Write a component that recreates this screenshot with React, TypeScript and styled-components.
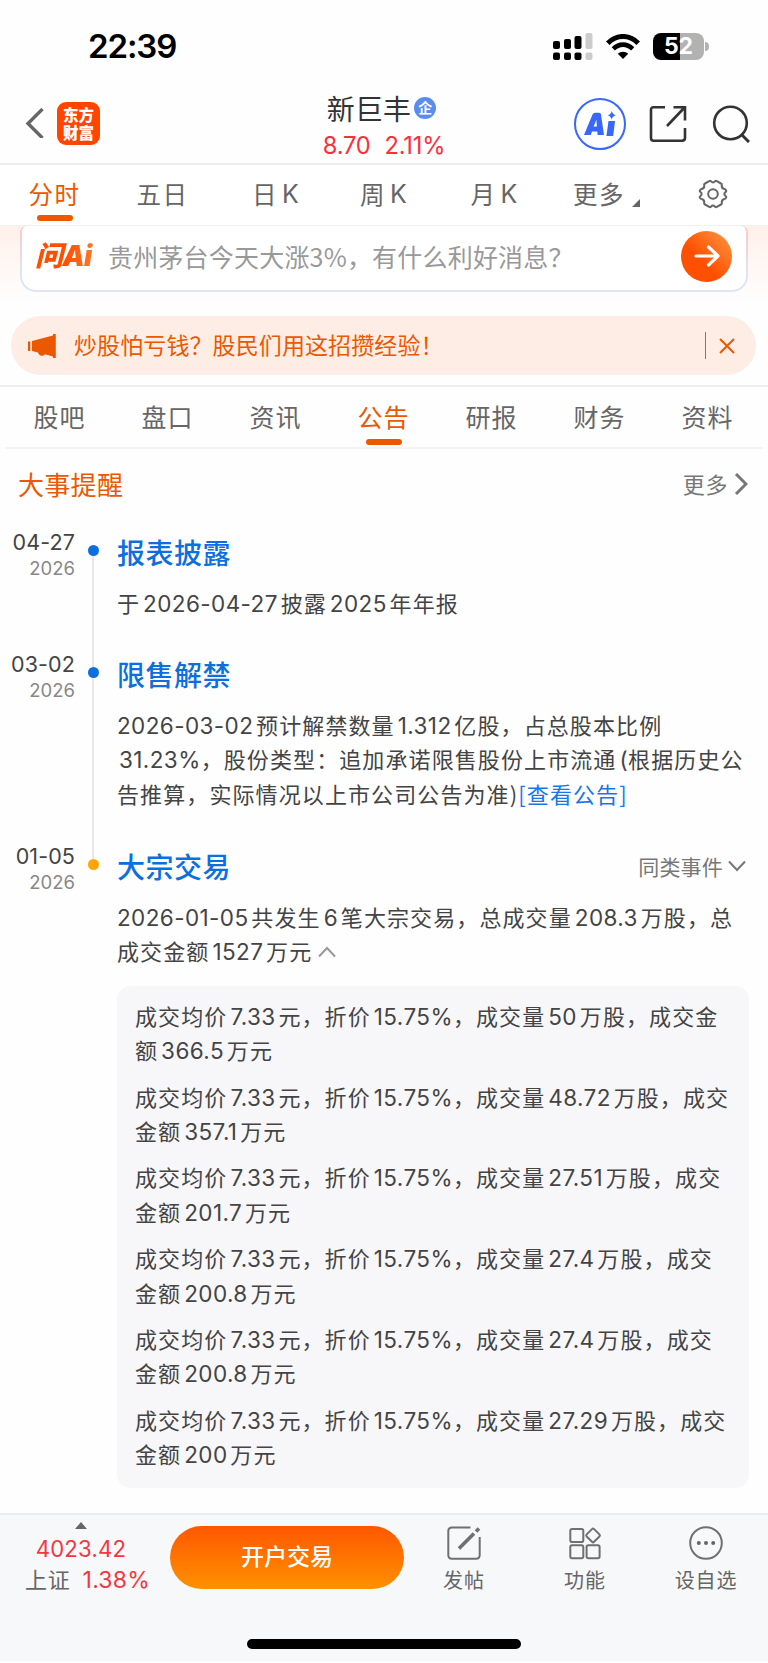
import React from 'react';
import styled, { createGlobalStyle } from 'styled-components';

const GlobalStyle = createGlobalStyle`
  * { box-sizing: border-box; }
  body {
    margin: 0;
    background: #fefefe;
    font-family: Inter, "Noto Sans CJK SC", sans-serif;
    color: #444;
  }
`;

const CJK = '"Noto Sans CJK SC", sans-serif';

const Page = styled.div`
  width: 768px;
  height: 1663px;
  overflow: hidden;
  display: flex;
  flex-direction: column;
`;

const StatusBar = styled.div`
  height: 78px;
  padding: 14px 59px 0 88px;
  display: flex;
  align-items: center;
  justify-content: space-between;
`;
const Clock = styled.div`
  font-size: 33px;
  font-weight: 600;
  color: #000;
  letter-spacing: -1.1px;
`;
const StatusIcons = styled.div`
  display: flex;
  align-items: center;
`;
const Battery = styled.div`
  width: 51px;
  height: 27px;
  margin-left: 13px;
  border-radius: 8px;
  background: linear-gradient(90deg, #000 52%, #b2b2b2 52%);
  color: #fff;
  font-size: 23px;
  font-weight: 700;
  line-height: 27px;
  text-align: center;
`;
const BatteryTip = styled.div`
  width: 4px;
  height: 9px;
  margin-left: 1px;
  border-radius: 0 4px 4px 0;
  background: #b2b2b2;
`;

const Header = styled.header`
  height: 87px;
  border-bottom: 2px solid #ececec;
  display: grid;
  grid-template-columns: 250px 1fr 250px;
`;
const HeaderLeft = styled.div`
  display: flex;
  align-items: center;
  padding: 6px 0 2px 25px;
  gap: 13px;
  height: 86px;
`;
const Brand = styled.div`
  width: 43px;
  height: 43px;
  border-radius: 9px;
  background: #ff4500;
  color: #fff;
  font: 900 15.5px/18px ${CJK};
  text-align: center;
  padding-top: 3px;
`;
const Quote = styled.div`
  display: flex;
  flex-direction: column;
  align-items: center;
  padding-top: 9px;
`;
const StockName = styled.div`
  display: flex;
  align-items: center;
  gap: 3px;
  height: 41px;
  padding-right: 5px;
  font: 400 28px/40px ${CJK};
  letter-spacing: 0.2px;
  color: #333;
`;
const CompanyBadge = styled.span`
  width: 22px;
  height: 22px;
  border-radius: 50%;
  background: #5a8cf0;
  color: #fff;
  font: 700 14px/21px ${CJK};
  letter-spacing: 0;
  text-align: center;
`;
const Price = styled.div`
  display: flex;
  gap: 14px;
  height: 34px;
  line-height: 35px;
  font-size: 23.7px;
  letter-spacing: -0.2px;
  color: #fb2f3b;
`;
const HeaderRight = styled.div`
  display: flex;
  align-items: center;
  justify-content: flex-end;
  gap: 23px;
  height: 86px;
  padding: 6px 18px 0 0;
`;
const AiButton = styled.div`
  width: 52px;
  height: 52px;
  border: 2.5px solid #3767fb;
  border-radius: 50%;
  display: flex;
  align-items: center;
  justify-content: center;
  color: #3767fb;
`;

const ChartTabs = styled.nav`
  height: 61px;
  border-bottom: 1px solid #f1f1f1;
  display: grid;
  grid-template-columns: 107px 109px 117px 99px 122px 103px 109px;
  background: #fff;
`;
const ChartTab = styled.div<{ $active?: boolean }>`
  display: flex;
  flex-direction: column;
  align-items: center;
  font: 400 24.5px/36px ${CJK};
  letter-spacing: 1.5px;
  padding: 11px 0 0 2px;
  color: ${(p) => (p.$active ? '#ec5800' : '#666')};
`;
const TabRow = styled.div`
  display: flex;
  align-items: center;
`;
const Latin = styled.span`
  font-size: 25px;
  font-family: Inter, sans-serif;
  margin-left: 4px;
  letter-spacing: 0;
`;
const Underline = styled.div`
  width: 36px;
  height: 6px;
  border-radius: 3px;
  background: #ec5800;
`;
const ChartUnderline = styled(Underline)`
  margin-top: 3px;
`;
const MoreMark = styled.svg`
  margin: 18px 0 0 7px;
`;
const Gear = styled.svg`
  margin-top: 3px;
`;

const AskArea = styled.section`
  height: 90px;
  padding: 0 20px;
  background: linear-gradient(#fff0ea, #fefefe 85%);
`;
const AskFrame = styled.div`
  height: 66px;
  padding: 0 2px 2px;
  border-radius: 6px 6px 16px 16px;
  background: linear-gradient(#ffc9c2, #dfe4f7 75%);
`;
const AskBox = styled.div`
  height: 64px;
  border-radius: 5px 5px 14px 14px;
  background: #fff;
  display: flex;
  align-items: center;
  padding: 0 14px 4px 13px;
`;
const AskLogo = styled.div`
  width: 73px;
  font: italic 900 28px/40px Inter, ${CJK};
  letter-spacing: -0.6px;
  background: linear-gradient(90deg, #ff4e00 40%, #ff8b3d);
  background-clip: text;
  color: transparent;
`;
const AskHint = styled.div`
  flex: 1;
  font: 400 25px/40px ${CJK};
  letter-spacing: 0.2px;
  color: #999;
`;
const Go = styled.div`
  width: 51px;
  height: 51px;
  border-radius: 50%;
  background: linear-gradient(45deg, #ff4f00 40%, #ff9a45);
  display: flex;
  align-items: center;
  justify-content: center;
`;

const Banner = styled.section`
  height: 59px;
  margin: 0 12px 10px 11px;
  padding: 0 21px 0 17px;
  border-radius: 30px;
  background: #fdede5;
  display: flex;
  align-items: center;
  color: #ec5800;
`;
const BannerText = styled.div`
  flex: 1;
  padding: 0 0 3px 18px;
  font: 400 23px/34px ${CJK};
  letter-spacing: 0.1px;
`;
const BannerRule = styled.div`
  width: 1.5px;
  height: 27px;
  margin-right: 13px;
  background: #ec5800;
`;

const InfoTabs = styled.nav`
  height: 62px;
  margin: 0 5px;
  border-bottom: 2px solid #f3f3f3;
  display: grid;
  grid-template-columns: repeat(7, 108px);
`;
const InfoWrap = styled.div`
  border-top: 2px solid #eee;
`;
const InfoTab = styled.div<{ $active?: boolean }>`
  display: flex;
  flex-direction: column;
  align-items: center;
  gap: 4px;
  padding: 10px 0 0 1px;
  font: 400 25px/38px ${CJK};
  letter-spacing: 1px;
  color: ${(p) => (p.$active ? '#ec5800' : '#666')};
`;

const SectionHead = styled.div`
  height: 79px;
  padding: 0 20px 9px 18px;
  display: flex;
  align-items: center;
  justify-content: space-between;
`;
const SectionTitle = styled.h2`
  margin: 0;
  font: 400 26px/40px ${CJK};
  letter-spacing: 0.3px;
  color: #ec5800;
`;
const More = styled.div`
  display: flex;
  align-items: center;
  gap: 6px;
  font: 400 22px/34px ${CJK};
  letter-spacing: 0.6px;
  color: #777;
`;
const MoreLabel = styled.span`
  padding-bottom: 2px;
`;

const Timeline = styled.main`
  height: 985px;
`;
const Item = styled.article<{ $h: number }>`
  height: ${(p) => p.$h}px;
  display: grid;
  grid-template-columns: 75px 42px 632px;
`;
const DateCol = styled.div`
  text-align: right;
`;
const Day = styled.div`
  font-size: 21.5px;
  line-height: 28px;
  letter-spacing: 0.1px;
  color: #444;
  white-space: nowrap;
`;
const Year = styled.div`
  font-size: 18.5px;
  line-height: 25px;
  letter-spacing: 0;
  color: #888;
`;
const Rail = styled.div`
  display: flex;
  flex-direction: column;
  align-items: center;
  padding-right: 6px;
`;
const Segment = styled.div<{ $grow?: boolean; $hidden?: boolean }>`
  width: 2px;
  height: 17px;
  flex: ${(p) => (p.$grow ? '1' : '0 0 17px')};
  background: ${(p) => (p.$hidden ? 'transparent' : '#e8e8e8')};
`;
const Dot = styled.div<{ $color: string }>`
  width: 11px;
  height: 11px;
  border-radius: 50%;
  background: ${(p) => p.$color};
`;
const ItemHead = styled.div`
  height: 34px;
  margin: 7px 0 16px;
  display: flex;
  align-items: center;
  justify-content: space-between;
`;
const ItemTitle = styled.h3`
  margin: 0;
  font: 500 28px/34px ${CJK};
  letter-spacing: 0.5px;
  color: #0b6fe0;
`;
const Similar = styled.div`
  display: flex;
  align-items: center;
  gap: 5px;
  padding-right: 3px;
  font: 400 21px/30px ${CJK};
  letter-spacing: 0.2px;
  color: #777;
`;
const Line = styled.div`
  height: 34.4px;
  font: 400 22px/34.4px ${CJK};
  letter-spacing: 1.1px;
  white-space: nowrap;
  color: #444;
`;
const Num = styled.span<{ $tight?: boolean; $indent?: boolean }>`
  font-family: Inter, sans-serif;
  font-size: 22.5px;
  letter-spacing: 0.4px;
  margin: 0 ${(p) => (p.$tight ? 0 : 2.8)}px 0 3px;
  &:first-child { margin-left: ${(p) => (p.$indent ? 2 : 0)}px; }
`;
/* Numbers that come after text keep their leading gap even as the first element of a line. */
const InnerNum = styled(Num)`
  &:first-child { margin-left: 3px; }
`;
const Link = styled.span`
  color: #1677e8;
`;
const Details = styled.div`
  margin-top: 18px;
  height: 502px;
  padding: 12px 18px;
  border-radius: 14px;
  background: #f7f7fa;
  display: flex;
  flex-direction: column;
  gap: 12px;
`;

const BottomBar = styled.footer`
  height: 148px;
  border-top: 2px solid #ececee;
  background: #f7f8fa;
  display: flex;
  flex-direction: column;
  justify-content: space-between;
  align-items: center;
`;
const Actions = styled.div`
  width: 768px;
  display: grid;
  grid-template-columns: 170px 234px 120px 122px 120px;
`;
const IndexBox = styled.div`
  display: flex;
  flex-direction: column;
  align-items: center;
  padding: 7px 8px 0 0;
`;
const IndexRow = styled.div`
  display: flex;
  align-items: center;
  gap: 12px;
  height: 31px;
  font-size: 23px;
  letter-spacing: 0.2px;
  white-space: nowrap;
  color: #f6363f;
`;
const IndexValue = styled(IndexRow)`
  margin-top: 4px;
  font-size: 22.2px;
`;
const IndexChange = styled(IndexRow)`
  padding-left: 13px;
`;
const IndexName = styled.span`
  font: 400 22px/31px ${CJK};
  letter-spacing: 0.8px;
  padding-bottom: 2px;
  color: #666;
`;
const TradeButton = styled.button`
  height: 63px;
  margin: 11px 0 0;
  padding: 0 0 5px;
  border: 0;
  border-radius: 32px;
  background: linear-gradient(#ff5700, #ff9100);
  color: #fff;
  font: 500 23px/56px ${CJK};
`;
const Action = styled.div`
  display: flex;
  flex-direction: column;
  align-items: center;
  padding-top: 11px;
  gap: 4px;
  font: 400 20px/32px ${CJK};
  letter-spacing: 0.9px;
  color: #666;
`;
const HomeIndicator = styled.div`
  width: 274px;
  height: 10px;
  margin-bottom: 12px;
  border-radius: 5px;
  background: #000;
`;
const Wifi = styled.svg`
  margin-left: 13px;
`;

const Chevron = ({ d, w, h, sw = 2.5, color = '#777' }: { d: string; w: number; h: number; sw?: number; color?: string }) => (
  <svg width={w} height={h} viewBox={`0 0 ${w} ${h}`} fill="none" stroke={color} strokeWidth={sw}>
    <path d={d} />
  </svg>
);

/* Sets runs of digits and Latin punctuation in the numeral face. */
const Mixed = ({ text, indent, children }: { text: string; indent?: boolean; children?: React.ReactNode }) => (
  <Line>
    {text.split(/([0-9.%(-]+)/).filter(Boolean).map((part, i) => {
      if (!/^[0-9.%(-]/.test(part)) return <React.Fragment key={i}>{part}</React.Fragment>;
      const Run = i === 0 ? Num : InnerNum;
      return <Run key={i} $tight={/[%(]$/.test(part)} $indent={indent}>{part}</Run>;
    })}
    {children}
  </Line>
);

const deals: [string, string][] = [
  ['成交均价7.33元，折价15.75%，成交量50万股，成交金', '额366.5万元'],
  ['成交均价7.33元，折价15.75%，成交量48.72万股，成交', '金额357.1万元'],
  ['成交均价7.33元，折价15.75%，成交量27.51万股，成交', '金额201.7万元'],
  ['成交均价7.33元，折价15.75%，成交量27.4万股，成交', '金额200.8万元'],
  ['成交均价7.33元，折价15.75%，成交量27.4万股，成交', '金额200.8万元'],
  ['成交均价7.33元，折价15.75%，成交量27.29万股，成交', '金额200万元'],
];

const DateCell = ({ day }: { day: string }) => (
  <DateCol>
    <Day>{day}</Day>
    <Year>2026</Year>
  </DateCol>
);

export default function App() {
  return (
    <Page>
      <GlobalStyle />
      <StatusBar>
        <Clock>22:39</Clock>
        <StatusIcons>
          <svg width="40" height="27" viewBox="0 0 40 27">
            <rect x="0" y="8" width="7" height="8" rx="2" />
            <rect x="11" y="6" width="7" height="10" rx="2" />
            <rect x="21.5" y="3" width="7" height="13" rx="2" />
            <rect x="32.5" y="0" width="7" height="16" rx="2" fill="#ccc" />
            <rect x="0" y="19.5" width="7" height="7.5" rx="2" />
            <rect x="11" y="19.5" width="7" height="7.5" rx="2" />
            <rect x="21.5" y="19.5" width="7" height="7.5" rx="2" />
            <rect x="32.5" y="19.5" width="7" height="7.5" rx="2" fill="#ccc" />
          </svg>
          <Wifi width="34" height="25" viewBox="0 0 34 25" fill="none" stroke="#000">
            <path d="M1.8 9.2C10.5 .2 23.5 .2 32.2 9.2" strokeWidth="5" />
            <path d="M7.3 14.8C13 9.2 21 9.2 26.7 14.8" strokeWidth="4.6" />
            <path d="M17 25L11.8 19.8C14.6 17 19.4 17 22.2 19.8Z" fill="#000" stroke="none" />
          </Wifi>
          <Battery>52</Battery>
          <BatteryTip />
        </StatusIcons>
      </StatusBar>

      <Header>
        <HeaderLeft>
          <Chevron w={19} h={30} d="M17.5 1L3 15.5L17.5 30" sw={3.4} color="#666" />
          <Brand>东方<br />财富</Brand>
        </HeaderLeft>
        <Quote>
          <StockName>新巨丰<CompanyBadge>企</CompanyBadge></StockName>
          <Price><span>8.70</span><span>2.11%</span></Price>
        </Quote>
        <HeaderRight>
          <AiButton>
            <svg width="32" height="26" viewBox="0 0 32 26" fill="#3767fb">
              <path fillRule="evenodd" d="M0 24L8.5 3.5Q9.3 1.8 11 1.8H15.2Q16.8 1.8 17 3.5L20 24H13.6L13.3 20.5H8L6.8 24ZM9.6 15.5H12.9L12.4 8.8Z" />
              <path d="M24.5 10H31L29.2 25H22.4ZM27.8 0Q28.5 3.4 32 4.2Q28.5 5 27.6 8.5Q26.8 5 23.6 4.2Q27 3.4 27.8 0Z" />
            </svg>
          </AiButton>
          <svg width="38" height="38" viewBox="0 0 38 38" fill="none" stroke="#333" strokeWidth="2.6">
            <path d="M16 2.3H4.5Q2 2.3 2 4.8V33Q2 35.7 4.5 35.7H33Q36 35.7 36 33V23M18 21L35.5 2.5M24.5 2.3H36V15.5" />
          </svg>
          <svg width="40" height="38" viewBox="-2 0 40 38" fill="none" stroke="#333" strokeWidth="2.6">
            <circle cx="18.5" cy="18" r="16.3" />
            <path d="M29.5 29.5L37 37" strokeWidth="3" />
          </svg>
        </HeaderRight>
      </Header>

      <ChartTabs>
        <ChartTab $active>分时<ChartUnderline /></ChartTab>
        <ChartTab>五日</ChartTab>
        <ChartTab><TabRow>日<Latin>K</Latin></TabRow></ChartTab>
        <ChartTab><TabRow>周<Latin>K</Latin></TabRow></ChartTab>
        <ChartTab><TabRow>月<Latin>K</Latin></TabRow></ChartTab>
        <ChartTab>
          <TabRow>
            更多
            <MoreMark width="8" height="8" viewBox="0 0 8 8"><path d="M8 0V8H0Z" fill="#666" /></MoreMark>
          </TabRow>
        </ChartTab>
        <ChartTab>
          <Gear width="30" height="30" viewBox="0 0 30 30" fill="none" stroke="#666" strokeWidth="2" strokeLinejoin="round">
            <path d="M11.2 2.2Q12.2 1.4 13 2.3Q15 4.5 17 2.3Q17.8 1.4 18.8 2.2L23 4.5Q24 5 23.8 6.2Q23.3 9.5 26.5 10Q27.8 10.2 28 11.5Q28.8 12.3 27.5 13Q25.2 15 27.5 17Q28.8 18 28 18.8Q27.5 20 26.3 20Q23.3 20.8 23.8 23.8Q24 25 23 25.5L18.8 27.8Q17.8 28.6 17 27.7Q15 25.5 13 27.7Q12.2 28.6 11.2 27.8L7 25.5Q6 25 6.2 23.8Q6.7 20.8 3.7 20Q2.5 20 2 18.8Q1.2 18 2.5 17Q4.8 15 2.5 13Q1.2 12.3 2 11.5Q2.2 10.2 3.5 10Q6.7 9.5 6.2 6.2Q6 5 7 4.5Z" />
            <circle cx="15" cy="15" r="4.8" />
          </Gear>
        </ChartTab>
      </ChartTabs>

      <AskArea>
        <AskFrame>
          <AskBox>
            <AskLogo>问Ai</AskLogo>
            <AskHint>贵州茅台今天大涨3%，有什么利好消息？</AskHint>
            <Go>
              <svg width="26" height="22" viewBox="0 0 26 22" fill="none" stroke="#fff" strokeWidth="3.2" strokeLinecap="round" strokeLinejoin="round">
                <path d="M2 11H24M14.5 2L24 11L14.5 20" />
              </svg>
            </Go>
          </AskBox>
        </AskFrame>
      </AskArea>

      <Banner>
        <svg width="28" height="24" viewBox="0 0 28 24" fill="#ec5800">
          <path d="M0 7.5H2.3V17H0ZM4 7L25 1.5V0H27.8V24H25V22.4L17 20.3C15 23 11 22 10 18.5L4 17Z" />
        </svg>
        <BannerText>炒股怕亏钱？股民们用这招攒经验！</BannerText>
        <BannerRule />
        <Chevron w={16} h={16} d="M1 1L15 15M15 1L1 15" sw={2} color="#ec5800" />
      </Banner>

      <InfoWrap>
        <InfoTabs>
          {['股吧', '盘口', '资讯', '公告', '研报', '财务', '资料'].map((t) => (
            <InfoTab key={t} $active={t === '公告'}>{t}{t === '公告' && <Underline />}</InfoTab>
          ))}
        </InfoTabs>
      </InfoWrap>

      <SectionHead>
        <SectionTitle>大事提醒</SectionTitle>
        <More><MoreLabel>更多</MoreLabel><Chevron w={14} h={22} d="M2 1L12 11L2 21" sw={3} /></More>
      </SectionHead>

      <Timeline>
        <Item $h={122}>
          <DateCell day="04-27" />
          <Rail><Segment $hidden /><Dot $color="#0b6fe0" /><Segment $grow /></Rail>
          <div>
            <ItemHead><ItemTitle>报表披露</ItemTitle></ItemHead>
            <Mixed text="于2026-04-27披露2025年年报" />
          </div>
        </Item>
        <Item $h={192}>
          <DateCell day="03-02" />
          <Rail><Segment /><Dot $color="#0b6fe0" /><Segment $grow /></Rail>
          <div>
            <ItemHead><ItemTitle>限售解禁</ItemTitle></ItemHead>
            <Mixed text="2026-03-02预计解禁数量1.312亿股，占总股本比例" />
            <Mixed indent text="31.23%，股份类型：追加承诺限售股份上市流通(根据历史公" />
            <Mixed text="告推算，实际情况以上市公司公告为准)"><Link>[查看公告]</Link></Mixed>
          </div>
        </Item>
        <Item $h={671}>
          <DateCell day="01-05" />
          <Rail><Segment /><Dot $color="#ffa500" /><Segment $grow $hidden /></Rail>
          <div>
            <ItemHead>
              <ItemTitle>大宗交易</ItemTitle>
              <Similar>同类事件<Chevron w={18} h={12} d="M1 1.5L9 10L17 1.5" sw={2} /></Similar>
            </ItemHead>
            <Mixed text="2026-01-05共发生6笔大宗交易，总成交量208.3万股，总" />
            <Mixed text="成交金额1527万元"> <Chevron w={18} h={14} d="M1 10.5L9 2L17 10.5" sw={2} color="#999" /></Mixed>
            <Details>
              {deals.map(([a, b], i) => (
                <div key={i}><Mixed text={a} /><Mixed text={b} /></div>
              ))}
            </Details>
          </div>
        </Item>
      </Timeline>

      <BottomBar>
        <Actions>
          <IndexBox>
            <svg width="12" height="7" viewBox="0 0 12 7"><path d="M6 0L12 7H0Z" fill="#666" /></svg>
            <IndexValue>4023.42</IndexValue>
            <IndexChange><IndexName>上证</IndexName>1.38%</IndexChange>
          </IndexBox>
          <TradeButton>开户交易</TradeButton>
          <Action>
            <svg width="34" height="34" viewBox="0 0 34 34" fill="none" stroke="#707070" strokeWidth="2">
              <path d="M23.5 1.5H5Q1.3 1.5 1.3 5V29Q1.3 32.7 5 32.7H29Q32.7 32.7 32.7 29V11" />
              <path d="M12 22.5L27 7.5M29 5.5L32 2.5" strokeWidth="3.6" />
            </svg>
            发帖
          </Action>
          <Action>
            <svg width="34" height="34" viewBox="0 0 34 34" fill="none" stroke="#707070" strokeWidth="2">
              <rect x="2.3" y="3" width="13" height="13" rx="1.8" />
              <rect x="2.3" y="19.3" width="13" height="13" rx="1.8" />
              <rect x="18.6" y="19.3" width="13" height="13" rx="1.8" />
              <rect x="19.8" y="4.2" width="10.5" height="10.5" rx="1.5" transform="rotate(45 25.05 9.45)" />
            </svg>
            功能
          </Action>
          <Action>
            <svg width="34" height="34" viewBox="0 0 34 34" fill="none" stroke="#707070" strokeWidth="2">
              <circle cx="17" cy="17" r="15.8" />
              <g fill="#666" stroke="none"><circle cx="9.8" cy="17" r="2" /><circle cx="17" cy="17" r="2" /><circle cx="24.2" cy="17" r="2" /></g>
            </svg>
            设自选
          </Action>
        </Actions>
        <HomeIndicator />
      </BottomBar>
    </Page>
  );
}
